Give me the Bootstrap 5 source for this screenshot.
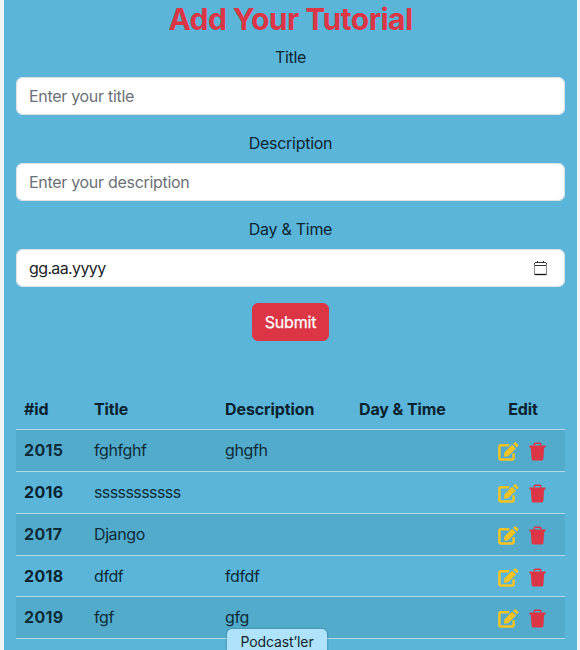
<!DOCTYPE html>
<html lang="en">
<head>
<meta charset="utf-8">
<meta name="viewport" content="width=device-width, initial-scale=1">
<title>Add Your Tutorial</title>
<link href="https://cdn.jsdelivr.net/npm/bootstrap@5.3.0/dist/css/bootstrap.min.css" rel="stylesheet">
<style>
  body { font-family: Inter, "Liberation Sans", sans-serif; background: #eef3f6; color: #0d2533; height: 650px; overflow: hidden; letter-spacing: -.28px; }
  .page-panel { background: #5ab5d9; height: 650px; margin: 0 3px 0 4px; padding: 0 12px; overflow: hidden; }
  .page-title { font-size: 30px; font-weight: 700; line-height: 35px; letter-spacing: -.54px; padding-top: 2px; }
  .form-label { line-height: 24px; }
  .form-control { letter-spacing: -.3px; height: 38px; border-color: #dee2e6; }
  .form-control::placeholder { color: #6b7076; }
  .date-text { letter-spacing: -.62px; }
  .submit-btn { letter-spacing: -.22px; color: #fff; -webkit-text-stroke: .25px #fff; }
  .tutorial-table { --bs-table-bg: transparent; --bs-table-color: #0d2b38; --bs-table-striped-color: #0d2b38; --bs-table-striped-bg: #53abcc; --bs-table-border-color: #b4d9e9; margin-top: 47px; table-layout: fixed; }
  .tutorial-table tr { height: 41.8px; }
  .tutorial-table th { color: #0a2230; letter-spacing: -.1px; }
  .tutorial-table tbody th { letter-spacing: .3px; }
  .tutorial-table td { letter-spacing: -.4px; }
  .tutorial-table .tight { letter-spacing: -.58px; }
  .edit-cell .d-flex { gap: 10px; padding: 4px 0 0 9px; }
  .dock-tip { left: 227px; top: 629px; width: 100px; height: 26px; background: #aee3fb; border-radius: 5px; font-size: 14px; line-height: 26px; letter-spacing: -.1px; color: #14232c; box-shadow: 0 0 2px rgba(20, 60, 80, .6); }
</style>
<script src="https://cdn.jsdelivr.net/npm/bootstrap@5.3.0/dist/js/bootstrap.bundle.min.js"></script>
</head>
<body>
<svg width="0" height="0" class="position-absolute" aria-hidden="true">
  <symbol id="pen" viewBox="0 0 21 19">
    <path d="M11.2 3.2H2.9Q1.4 3.2 1.4 4.7V15.9Q1.4 17.4 2.9 17.4H14.1Q15.6 17.4 15.6 15.9V11.3" fill="none" stroke="#f5c423" stroke-width="2.5"/>
    <path d="M14.1 2.7 17.9 6.5 10.1 14.2 6 14.8 6.4 10.5ZM15.1 1.8 16.4.6Q17.2 0 17.9.6L20.2 2.8Q20.8 3.5 20.2 4.1L18.8 5.6Z" fill="#f5c423"/>
  </symbol>
  <symbol id="bin" viewBox="0 0 17 19">
    <path d="M5.2 3.6V2.2Q5.2 1.2 6.2 1.2H10.8Q11.8 1.2 11.8 2.2V3.6" fill="none" stroke="#dc3545" stroke-width="1.4"/>
    <path d="M.4 3.5H16.6V5.5H15.2L14.4 16.8Q14.3 18.4 12.7 18.4H4.3Q2.7 18.4 2.6 16.8L1.8 5.5H.4Z" fill="#dc3545"/>
  </symbol>
</svg>
<main class="page-panel">
  <form class="text-center">
    <h2 class="page-title text-danger mb-2">Add Your Tutorial</h2>
    <div class="mb-3">
      <label class="form-label d-block" for="title">Title</label>
      <input id="title" class="form-control" type="text" placeholder="Enter your title">
    </div>
    <div class="mb-3">
      <label class="form-label d-block" for="desc">Description</label>
      <input id="desc" class="form-control" type="text" placeholder="Enter your description">
    </div>
    <div class="mb-3">
      <span class="form-label d-block">Day &amp; Time</span>
      <div class="form-control d-flex justify-content-between align-items-center">
        <span class="date-text">gg.aa.yyyy</span>
        <svg class="me-1" width="15" height="15" viewBox="1 1 15 15" fill="none">
          <path d="M2.5 14V4.5M14.5 14V4.5" stroke="#888"/>
          <path d="M2.5 14.5H14.5" stroke="#111" stroke-width="1.3"/>
          <path d="M3 5.5H14M3 2.5H14M5.5 1V3M11.5 1V3M2.5 3V4.5M14.5 3V4.5" stroke="#333"/>
        </svg>
      </div>
    </div>
    <button class="btn btn-danger submit-btn" type="button">Submit</button>
  </form>
  <table class="table table-striped tutorial-table mb-0">
    <colgroup><col style="width:70px"><col style="width:131px"><col style="width:134px"><col style="width:130px"><col></colgroup>
    <thead><tr><th>#id</th><th>Title</th><th>Description</th><th>Day &amp; Time</th><th class="text-center">Edit</th></tr></thead>
    <tbody>
      <tr><th>2015</th><td>fghfghf</td><td>ghgfh</td><td></td><td class="edit-cell"><div class="d-flex"><svg width="21" height="19"><use href="#pen"/></svg><svg width="17" height="19"><use href="#bin"/></svg></div></td></tr>
      <tr><th>2016</th><td class="tight">sssssssssss</td><td></td><td></td><td class="edit-cell"><div class="d-flex"><svg width="21" height="19"><use href="#pen"/></svg><svg width="17" height="19"><use href="#bin"/></svg></div></td></tr>
      <tr><th>2017</th><td>Django</td><td></td><td></td><td class="edit-cell"><div class="d-flex"><svg width="21" height="19"><use href="#pen"/></svg><svg width="17" height="19"><use href="#bin"/></svg></div></td></tr>
      <tr><th>2018</th><td>dfdf</td><td>fdfdf</td><td></td><td class="edit-cell"><div class="d-flex"><svg width="21" height="19"><use href="#pen"/></svg><svg width="17" height="19"><use href="#bin"/></svg></div></td></tr>
      <tr><th>2019</th><td>fgf</td><td>gfg</td><td></td><td class="edit-cell"><div class="d-flex"><svg width="21" height="19"><use href="#pen"/></svg><svg width="17" height="19"><use href="#bin"/></svg></div></td></tr>
    </tbody>
  </table>
</main>
<div class="dock-tip position-absolute text-center">Podcast’ler</div>
</body>
</html>
